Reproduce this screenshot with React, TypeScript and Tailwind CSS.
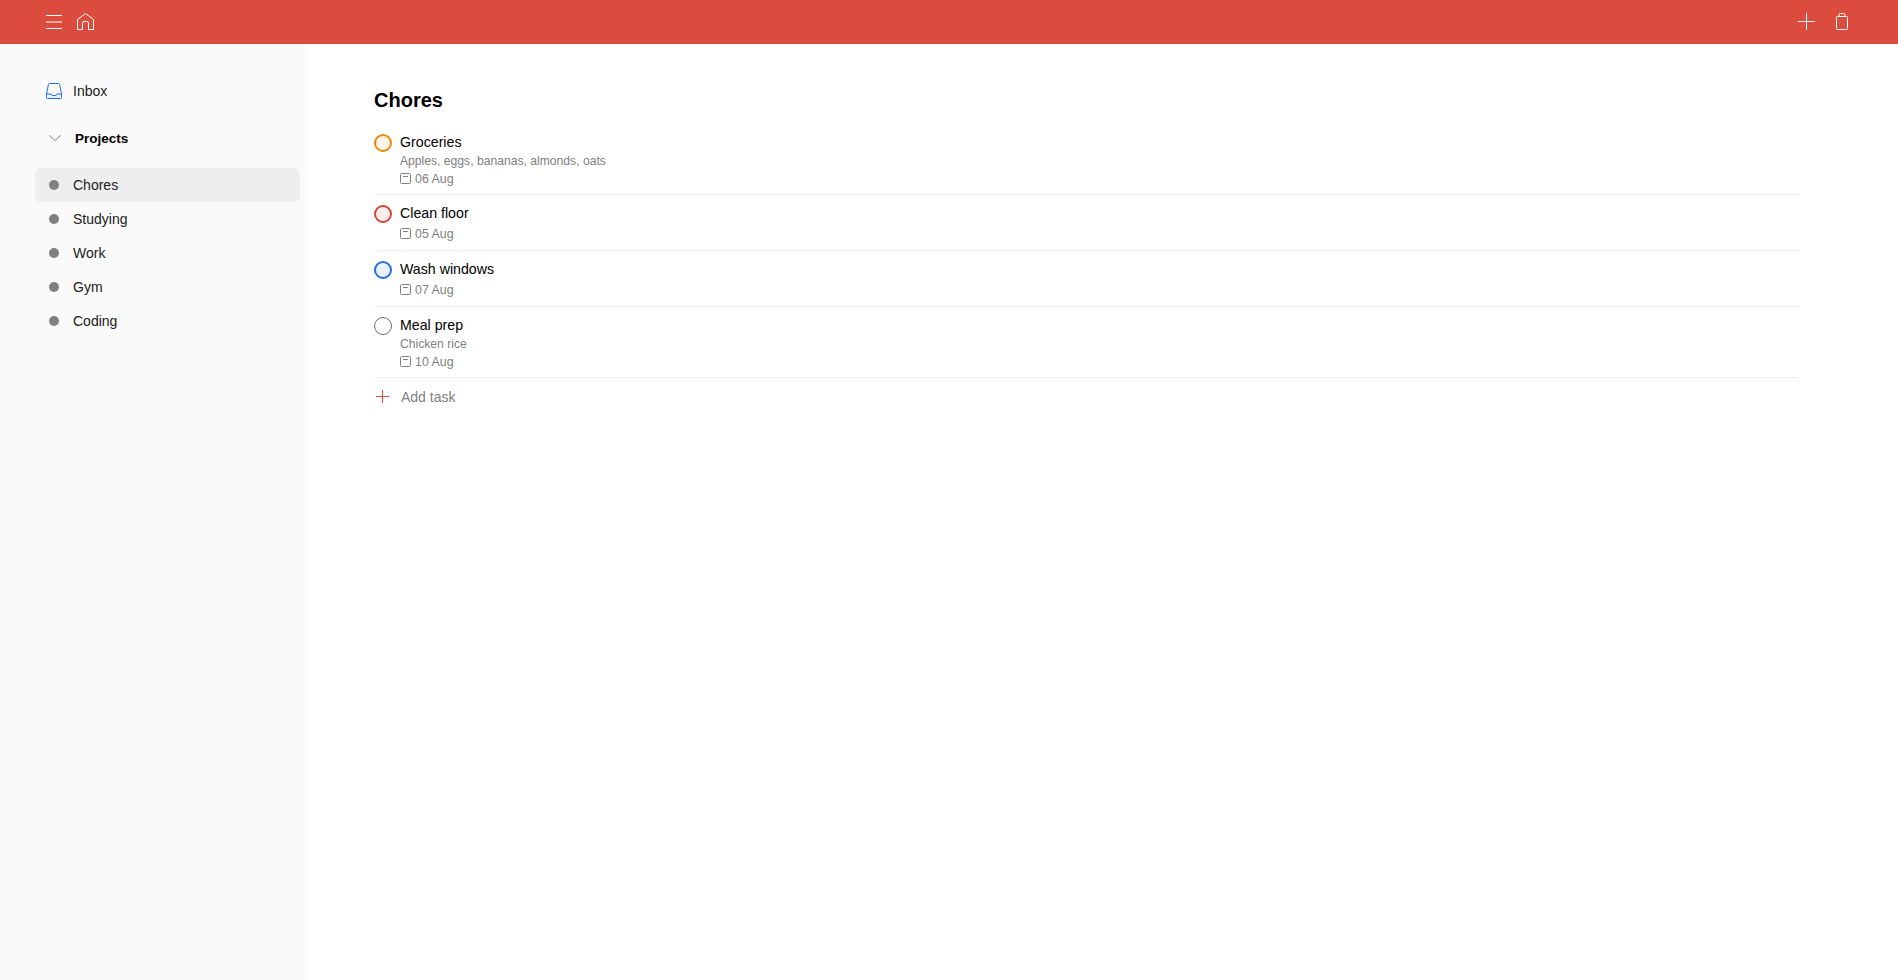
const projects = ['Chores', 'Studying', 'Work', 'Gym', 'Coding']

const tasks = [
  { name: 'Groceries', desc: 'Apples, eggs, bananas, almonds, oats', date: '06 Aug', ring: 'border-2 border-[#eb8909] bg-[#fdf3e6]' },
  { name: 'Clean floor', date: '05 Aug', ring: 'border-2 border-[#d1453b] bg-[#faeceb]' },
  { name: 'Wash windows', date: '07 Aug', ring: 'border-2 border-[#246fe0] bg-[#e9f1fc]' },
  { name: 'Meal prep', desc: 'Chicken rice', date: '10 Aug', ring: 'border border-[#6f6f6f] bg-white' },
]

function MenuIcon() {
  return (
    <svg width="16" height="14" viewBox="0 0 16 14" fill="none" stroke="white" strokeWidth="1">
      <path d="M0 .5h16M0 7h16M0 13.500h16" />
    </svg>
  )
}

function HomeIcon() {
  return (
    <svg width="17" height="17" viewBox="0 0 17 17" fill="none" stroke="white" strokeWidth="1">
      <path d="M.5 16.500V6.500L8.500 .5l8 6v10h-5V10a1.500 1.500 0 0 0-1.500-1.500H7A1.500 1.500 0 0 0 5.500 10v6.500z" strokeLinejoin="round" />
    </svg>
  )
}

function PlusIcon({ size, color }: { size: number; color: string }) {
  const mid = size / 2
  return (
    <svg width={size} height={size} viewBox={`0 0 ${size} ${size}`} fill="none" stroke={color} strokeWidth="1">
      <path d={`M0 ${mid}h${size}M${mid} 0v${size}`} />
    </svg>
  )
}

function ClipboardIcon() {
  return (
    <svg width="12" height="17" viewBox="0 0 12 17" fill="none" stroke="white" strokeWidth="1">
      <rect x="0.5" y="3.500" width="11" height="13" rx="1" />
      <path d="M3 3.500V2a1.500 1.500 0 0 1 1.500-1.500h3A1.500 1.500 0 0 1 9 2v1.500" />
    </svg>
  )
}

function InboxIcon() {
  return (
    <svg width="16" height="16" viewBox="0 0 16 16" fill="none" stroke="#246fe0" strokeWidth="1" className="shrink-0">
      <path d="M.5 11h4.500l1.200 1.500h3.600L11 11h4.500v3.500a1 1 0 0 1-1 1h-13a1 1 0 0 1-1-1z" fill="#e9f1fc" stroke="none" />
      <path d="M3.500 .5h9c.6 0 1 .4 1.100 1l1.900 9.500v3.500a1 1 0 0 1-1 1h-13a1 1 0 0 1-1-1V11l1.900-9.500c.1-.6.500-1 1.100-1z" />
      <path d="M.5 11h4.500l1.200 1.500h3.600L11 11h4.500" />
    </svg>
  )
}

function ChevronIcon() {
  return (
    <svg width="12" height="6" viewBox="0 0 12 6" fill="none" stroke="#808080" strokeWidth="1" className="shrink-0">
      <path d="M.3.3 6 5.500 11.700.3" />
    </svg>
  )
}

function CalendarIcon() {
  return (
    <svg width="11" height="11" viewBox="0 0 11 11" fill="none" stroke="#808080" strokeWidth="1" className="shrink-0 mb-[2px]">
      <rect x="0.5" y="0.5" width="10" height="10" rx="1" />
      <path d="M3 3.500h5" />
    </svg>
  )
}

export default function App() {
  return (
    <div className="min-h-screen flex flex-col bg-white font-['Liberation_Sans',sans-serif] text-black">
      <header className="h-[44px] shrink-0 bg-[#db4c3f] flex items-center justify-between pl-[46px] pr-[50px] pb-[1px]">
        <div className="flex items-center gap-[15px]">
          <MenuIcon />
          <HomeIcon />
        </div>
        <div className="flex items-center gap-[21px]">
          <PlusIcon size={17} color="white" />
          <ClipboardIcon />
        </div>
      </header>
      <div className="flex flex-1">
        <aside className="w-[305px] shrink-0 bg-[#fafafa] pt-[37px] pl-[35px] pr-[5px]">
          <div className="h-[20px] flex items-center gap-[11px] pl-[11px] text-sm text-[#202020]">
            <InboxIcon />
            <span>Inbox</span>
          </div>
          <div className="flex items-center mt-[27px] h-[20px] pl-[14px]">
            <ChevronIcon />
            <span className="ml-[14px] pt-[2px] text-[13.500px] font-bold">Projects</span>
          </div>
          <ul className="mt-[20px]">
            {projects.map((project, i) => (
              <li
                key={project}
                className={`h-[34px] flex items-center pl-[14px] gap-[14px] rounded-md text-sm text-[#202020] ${i === 0 ? 'bg-[#eeeeee]' : ''}`}
              >
                <span className="w-[10px] h-[10px] rounded-full bg-[#808080]" />
                {project}
              </li>
            ))}
          </ul>
        </aside>
        <main className="flex-1 pl-[69px] pr-[100px] pt-[44px]">
          <h1 className="text-xl font-bold leading-6">Chores</h1>
          <div className="mt-[12px]">
            {tasks.map((task) => (
              <div key={task.name} className={`flex gap-2 pt-[8px] border-b border-[#eeeeee] ${task.desc ? 'pb-[5px]' : 'pb-[6px]'}`}>
                <span className={`w-[18px] h-[18px] mt-[2px] shrink-0 rounded-full ${task.ring}`} />
                <div>
                  <div className="text-[14.200px] leading-[20px]">{task.name}</div>
                  {task.desc && <div className="mt-[1px] text-[12.150px] leading-[16px] text-[#808080]">{task.desc}</div>}
                  <div className={`flex items-center gap-[4px] text-[12.400px] leading-[20px] text-[#808080] ${task.desc ? '' : 'mt-[1px]'}`}>
                    <CalendarIcon />
                    {task.date}
                  </div>
                </div>
              </div>
            ))}
            <div className="flex items-center h-[37px] pl-[2px] gap-[12px] text-sm text-[#808080]">
              <PlusIcon size={13} color="#db4c3f" />
              Add task
            </div>
          </div>
        </main>
      </div>
    </div>
  )
}
